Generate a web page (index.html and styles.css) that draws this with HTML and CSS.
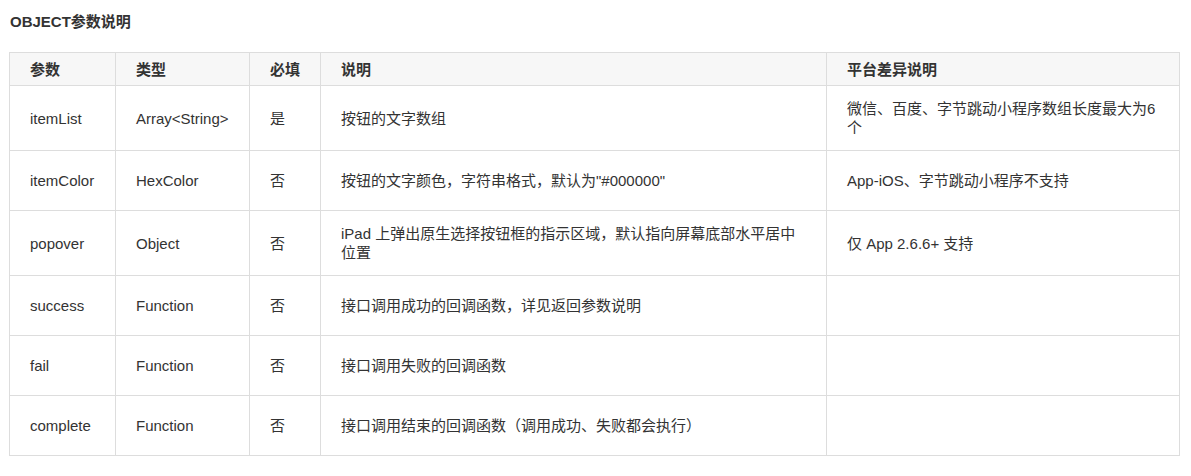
FILE: index.html
```html
<!DOCTYPE html>
<html lang="zh">
<head>
<meta charset="utf-8">
<link rel="stylesheet" href="styles.css">
</head>
<body>
<div class="page">
  <h4 class="title">OBJECT参数说明</h4>
  <table class="params">
    <colgroup>
      <col class="c1"><col class="c2"><col class="c3"><col class="c4"><col class="c5">
    </colgroup>
    <thead>
      <tr><th>参数</th><th>类型</th><th>必填</th><th>说明</th><th>平台差异说明</th></tr>
    </thead>
    <tbody>
      <tr><td>itemList</td><td>Array&lt;String&gt;</td><td>是</td><td>按钮的文字数组</td><td>微信、百度、字节跳动小程序数组长度最大为6个</td></tr>
      <tr><td>itemColor</td><td>HexColor</td><td>否</td><td>按钮的文字颜色，字符串格式，默认为"#000000"</td><td>App-iOS、字节跳动小程序不支持</td></tr>
      <tr><td>popover</td><td>Object</td><td>否</td><td>iPad 上弹出原生选择按钮框的指示区域，默认指向屏幕底部水平居中位置</td><td>仅 App 2.6.6+ 支持</td></tr>
      <tr><td>success</td><td>Function</td><td>否</td><td>接口调用成功的回调函数，详见返回参数说明</td><td></td></tr>
      <tr><td>fail</td><td>Function</td><td>否</td><td>接口调用失败的回调函数</td><td></td></tr>
      <tr><td>complete</td><td>Function</td><td>否</td><td>接口调用结束的回调函数（调用成功、失败都会执行）</td><td></td></tr>
    </tbody>
  </table>
</div>
</body>
</html>
```
FILE: styles.css
```css
html, body {
  margin: 0;
  padding: 0;
  background: #fff;
}
body {
  font-family: "Liberation Sans", Arial, "Noto Sans CJK SC", sans-serif;
  font-size: 15px;
  color: #333;
}
.page {
  padding: 12px 9px 0 9px;
}
.title {
  margin: 0 0 0 1px;
  font-size: 15px;
  line-height: 20px;
  font-weight: bold;
  color: #333;
}
.params {
  margin-top: 20px;
  width: 1170px;
  table-layout: fixed;
  border-collapse: collapse;
}
.c1 { width: 106px; }
.c2 { width: 134px; }
.c3 { width: 71px; }
.c4 { width: 506px; }
.c5 { width: 353px; }
.params th,
.params td {
  border: 1px solid #ddd;
  padding: 0 20px;
  text-align: left;
  vertical-align: middle;
  line-height: 19px;
}
.params th {
  background: #f7f7f7;
  font-weight: bold;
  height: 32px;
}
.params td {
  padding-top: 13px;
  padding-bottom: 13px;
}
.params tbody tr {
  height: 60px;
}
```
